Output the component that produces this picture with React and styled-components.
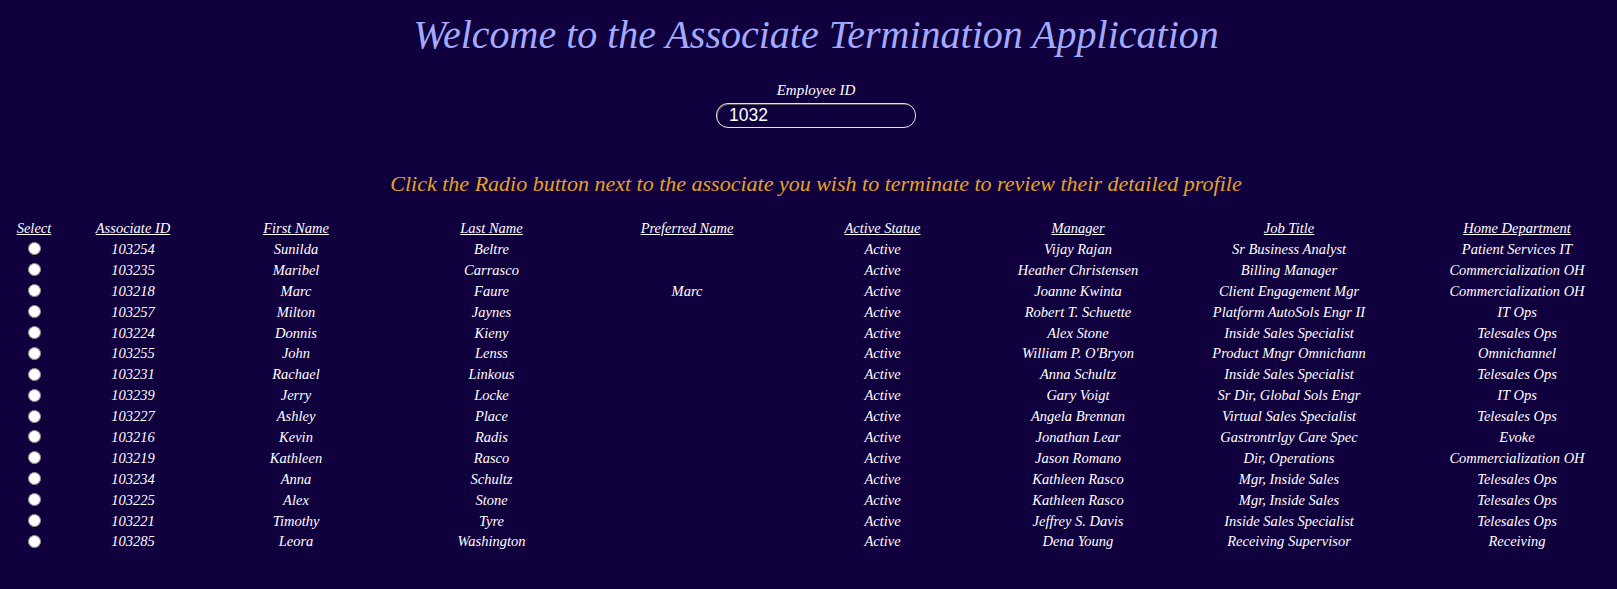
import styled, { createGlobalStyle } from "styled-components";

const GlobalStyle = createGlobalStyle`
  html, body {
    margin: 0;
    padding: 0;
    background: #10003e;
  }
  body {
    padding: 8px;
    font-family: "Liberation Serif", "Times New Roman", serif;
    color: #ffffff;
  }
`;

const associates = [
  ["103254", "Sunilda", "Beltre", "", "Active", "Vijay Rajan", "Sr Business Analyst", "Patient Services IT"],
  ["103235", "Maribel", "Carrasco", "", "Active", "Heather Christensen", "Billing Manager", "Commercialization OH"],
  ["103218", "Marc", "Faure", "Marc", "Active", "Joanne Kwinta", "Client Engagement Mgr", "Commercialization OH"],
  ["103257", "Milton", "Jaynes", "", "Active", "Robert T. Schuette", "Platform AutoSols Engr II", "IT Ops"],
  ["103224", "Donnis", "Kieny", "", "Active", "Alex Stone", "Inside Sales Specialist", "Telesales Ops"],
  ["103255", "John", "Lenss", "", "Active", "William P. O'Bryon", "Product Mngr Omnichann", "Omnichannel"],
  ["103231", "Rachael", "Linkous", "", "Active", "Anna Schultz", "Inside Sales Specialist", "Telesales Ops"],
  ["103239", "Jerry", "Locke", "", "Active", "Gary Voigt", "Sr Dir, Global Sols Engr", "IT Ops"],
  ["103227", "Ashley", "Place", "", "Active", "Angela Brennan", "Virtual Sales Specialist", "Telesales Ops"],
  ["103216", "Kevin", "Radis", "", "Active", "Jonathan Lear", "Gastrontrlgy Care Spec", "Evoke"],
  ["103219", "Kathleen", "Rasco", "", "Active", "Jason Romano", "Dir, Operations", "Commercialization OH"],
  ["103234", "Anna", "Schultz", "", "Active", "Kathleen Rasco", "Mgr, Inside Sales", "Telesales Ops"],
  ["103225", "Alex", "Stone", "", "Active", "Kathleen Rasco", "Mgr, Inside Sales", "Telesales Ops"],
  ["103221", "Timothy", "Tyre", "", "Active", "Jeffrey S. Davis", "Inside Sales Specialist", "Telesales Ops"],
  ["103285", "Leora", "Washington", "", "Active", "Dena Young", "Receiving Supervisor", "Receiving"],
];

// widths picked so each centred column lands where the original does;
// the last one is pushed right by a left padding to keep inside the page
const columns = [
  { label: "Select", width: 52 },
  { label: "Associate ID", width: 146 },
  { label: "First Name", width: 180 },
  { label: "Last Name", width: 211 },
  { label: "Preferred Name", width: 180 },
  { label: "Active Statue", width: 211 },
  { label: "Manager", width: 180 },
  { label: "Job Title", width: 242 },
  { label: "Home Department", width: 199, shift: 15 },
];

const Page = styled.div`
  display: flex;
  flex-direction: column;
`;

const Header = styled.header`
  display: flex;
  flex-direction: column;
  align-items: center;
  padding-left: 15px;
`;

const Title = styled.h1`
  margin: 3px 0 0;
  font-size: 40px;
  font-weight: normal;
  font-style: italic;
  color: #a3aaff;
  line-height: 48px;
`;

const SearchBox = styled.div`
  display: flex;
  flex-direction: column;
  align-items: center;
  margin-top: 22px;
`;

const Label = styled.label`
  font-style: italic;
  font-size: 15px;
  line-height: 18px;
  margin-bottom: 4px;
`;

const IdInput = styled.input`
  width: 200px;
  height: 25px;
  box-sizing: border-box;
  border: 1px solid #e6e6e6;
  box-shadow: inset 1px 1px 0 #555;
  border-radius: 12px;
  background: transparent;
  color: #ffffff;
  font-family: "Liberation Sans", Arial, sans-serif;
  font-size: 17.5px;
  padding: 0 12px;
  outline: none;
  caret-color: #ffffff;
`;

const Instructions = styled.p`
  margin: 43px 0 0;
  font-style: italic;
  font-size: 22px;
  line-height: 26px;
  color: #e4a328;
`;

const Table = styled.table`
  width: 1601px;
  margin-top: 20px;
  border-collapse: collapse;
  table-layout: fixed;
  font-style: italic;
  font-size: 14.5px;
`;

const HeadCell = styled.th`
  font-weight: normal;
  text-decoration: underline;
  text-align: center;
  padding: 0 0 0 ${(p) => p.$shift || 0}px;
  height: 22px;
`;

const Cell = styled.td`
  text-align: center;
  padding: 0 0 0 ${(p) => p.$shift || 0}px;
  height: 20.9px;
  white-space: nowrap;
`;

const Radio = styled.input`
  margin: 3px 0 0;
  width: 13px;
  height: 13px;
`;

export default function App() {
  return (
    <>
      <GlobalStyle />
      <Page>
        <Header>
          <Title>Welcome to the Associate Termination Application</Title>
          <SearchBox>
            <Label htmlFor="employee-id">Employee ID</Label>
            <IdInput id="employee-id" defaultValue="1032" autoFocus />
          </SearchBox>
          <Instructions>
            Click the Radio button next to the associate you wish to terminate to review their detailed profile
          </Instructions>
        </Header>
        <Table>
          <colgroup>
            {columns.map((c) => (
              <col key={c.label} style={{ width: c.width }} />
            ))}
          </colgroup>
          <thead>
            <tr>
              {columns.map((c) => (
                <HeadCell key={c.label} $shift={c.shift}>
                  {c.label}
                </HeadCell>
              ))}
            </tr>
          </thead>
          <tbody>
            {associates.map((row) => (
              <tr key={row[0]}>
                <Cell>
                  <Radio type="radio" name="associate" value={row[0]} />
                </Cell>
                {row.map((value, i) => (
                  <Cell key={i} $shift={columns[i + 1].shift}>
                    {value}
                  </Cell>
                ))}
              </tr>
            ))}
          </tbody>
        </Table>
      </Page>
    </>
  );
}
